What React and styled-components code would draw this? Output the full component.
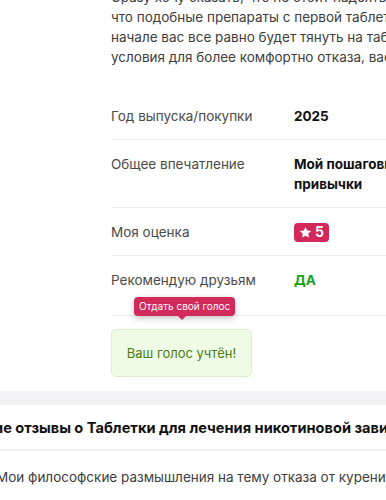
import React from "react";
import styled, { createGlobalStyle } from "styled-components";

const Global = createGlobalStyle`
  html, body { margin: 0; padding: 0; background: #fff; overflow: hidden; }
  body { font-family: Inter, "Noto Sans", sans-serif; color: #222; }
`;

const Page = styled.div`
  width: 386px;
  height: 500px;
  overflow: hidden;
`;

const Review = styled.section`
  padding-left: 111px;
  width: 700px;
`;

const Paragraph = styled.p`
  margin: -13px 0 0;
  font-size: 13.5px;
  line-height: 20px;
  color: #3d3d3d;
  white-space: nowrap;
`;

const Specs = styled.dl`
  margin: 25px 0 0;
`;

const Row = styled.div`
  display: grid;
  grid-template-columns: 183px 1fr;
  align-items: start;
  padding: ${(p) => (p.$last ? "14px 0 25px" : "14px 0 13px")};
  border-bottom: 1px solid #ececec;
  font-size: 13.5px;
  line-height: 20px;
`;

const Label = styled.dt`
  margin: 0;
  color: #4a4a4a;
`;

const Value = styled.dd`
  margin: 0;
  display: ${(p) => (p.$flex ? "flex" : "block")};
  align-items: center;
  height: ${(p) => (p.$flex ? "20px" : "auto")};
  font-weight: 700;
  color: ${(p) => p.$color || "#111"};
`;

const Badge = styled.span`
  display: inline-flex;
  align-items: center;
  gap: 3px;
  height: 19px;
  padding: 0 5px;
  border-radius: 4px;
  background: #d4285a;
  color: #fff;
  font-size: 14px;
  font-weight: 700;
  line-height: 1;
`;

const Vote = styled.div`
  position: relative;
  padding: 13px 0 14px;
`;

const Voted = styled.div`
  width: 141px;
  height: 48px;
  display: flex;
  align-items: center;
  justify-content: center;
  box-sizing: border-box;
  background: #f0fbe6;
  border: 1px solid #dcf0c8;
  border-radius: 5px;
  color: #4a7d12;
  font-size: 13px;
`;

const Tooltip = styled.div`
  position: absolute;
  left: 23px;
  top: -19px;
  padding: 0 5px;
  height: 19px;
  line-height: 19px;
  background: #d22a5a;
  color: #fff;
  font-size: 10px;
  border-radius: 4px;
  box-shadow: 0 2px 6px rgba(0, 0, 0, 0.25);
  white-space: nowrap;
  &::after {
    content: "";
    position: absolute;
    left: 44px;
    bottom: -4px;
    border-left: 4px solid transparent;
    border-right: 4px solid transparent;
    border-top: 4px solid #d22a5a;
  }
`;

const Band = styled.div`
  height: 14px;
  background: #f3f3f5;
`;

const Others = styled.section`
  margin-left: -4px;
  width: 900px;
`;

const Heading = styled.h2`
  margin: 0 0 0 -39px;
  padding: 13px 0 11px;
  font-size: 14.6px;
  line-height: 20px;
  font-weight: 700;
  color: #111;
  border-bottom: 2px solid #f1f1f3;
  white-space: nowrap;
`;

const Excerpt = styled.p`
  margin: 16px 0 0;
  font-size: 13.5px;
  line-height: 20px;
  color: #3d3d3d;
  white-space: nowrap;
`;

const StarIcon = () => (
  <svg width="13" height="13" viewBox="0 0 24 24" aria-hidden="true">
    <path
      fill="#fff"
      d="M12 1.8l3.1 6.6 7.2.9-5.3 5 1.4 7.1L12 17.9l-6.4 3.5 1.4-7.1-5.3-5 7.2-.9z"
    />
  </svg>
);

export default function App() {
  return (
    <Page>
      <Global />
      <Review>
        <Paragraph>
          Сразу хочу сказать, что не стоит надеяться на то,
          <br />
          что подобные препараты с первой таблетки избавят вас от тяги,
          <br />
          начале вас все равно будет тянуть на табак, но они создают
          <br />
          условия для более комфортно отказа, вас меньше будет ломать.
        </Paragraph>
        <Specs>
          <Row>
            <Label>Год выпуска/покупки</Label>
            <Value>2025</Value>
          </Row>
          <Row>
            <Label>Общее впечатление</Label>
            <Value>
              Мой пошаговый отказ от вредной
              <br />
              привычки
            </Value>
          </Row>
          <Row>
            <Label>Моя оценка</Label>
            <Value $flex>
              <Badge>
                <StarIcon />5
              </Badge>
            </Value>
          </Row>
          <Row $last>
            <Label>Рекомендую друзьям</Label>
            <Value $color="#18a418">ДА</Value>
          </Row>
        </Specs>
        <Vote>
          <Tooltip>Отдать свой голос</Tooltip>
          <Voted>Ваш голос учтён!</Voted>
        </Vote>
      </Review>
      <Band />
      <Others>
        <Heading>Другие отзывы о Таблетки для лечения никотиновой зависимости</Heading>
        <Excerpt>Мои философские размышления на тему отказа от курения</Excerpt>
      </Others>
    </Page>
  );
}
